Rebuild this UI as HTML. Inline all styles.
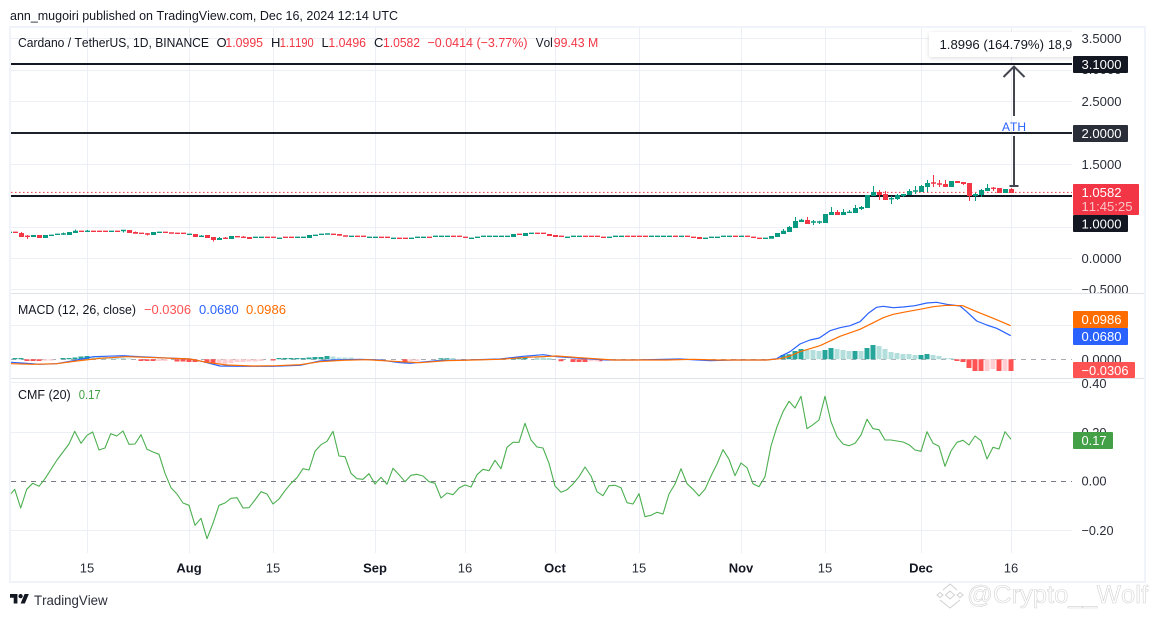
<!DOCTYPE html>
<html lang="en"><head><meta charset="utf-8"><title>ADA chart</title>
<style>
html,body{margin:0;padding:0;background:#fff;width:1154px;height:617px;overflow:hidden}
svg{display:block}
text{font-family:"Liberation Sans",sans-serif;font-size:13px;fill:#131722;font-kerning:none}
.r{fill:#f23645}
.a{fill:#2a2e39}
.w{fill:#fff}
.m{text-anchor:middle;fill:#2a2e39}
.b{text-anchor:middle;font-weight:bold;fill:#131722}
</style></head><body>
<svg width="1154" height="617" viewBox="0 0 1154 617" xmlns="http://www.w3.org/2000/svg">
<defs>
<clipPath id="tip"><rect x="925" y="28" width="147" height="34"/></clipPath>
<clipPath id="ax"><rect x="1073" y="28" width="71" height="265"/></clipPath>
<clipPath id="ax2"><rect x="1073" y="379" width="71" height="170"/></clipPath>
<clipPath id="pane"><rect x="11" y="28" width="1061" height="525"/></clipPath>
<filter id="sh" x="-10%" y="-30%" width="120%" height="170%"><feDropShadow dx="0" dy="1" stdDeviation="2" flood-color="#000" flood-opacity=".14"/></filter>
</defs>
<rect width="1154" height="617" fill="#fff"/>
<text x="10" y="20" textLength="388" lengthAdjust="spacingAndGlyphs" fill="#131722">ann_mugoiri published on TradingView.com, Dec 16, 2024 12:14 UTC</text>

<!-- grid -->
<g stroke="#eceff5" stroke-width="1" fill="none">
<path d="M87.5 28V553M189.5 28V553M273.5 28V553M375.5 28V553M465.5 28V553M555.5 28V553M639.5 28V553M741.5 28V553M825.5 28V553M921.5 28V553M1011.5 28V553"/>
<path d="M11 38.5H1072M11 70.5H1072M11 101.5H1072M11 164.5H1072M11 227.5H1072M11 258.5H1072M11 289.5H1072M11 325.5H1072M11 382.5H1072M11 432.5H1072M11 530.5H1072"/>
</g>
<path d="M11 293.5H1144M11 378.5H1144" stroke="#e0e3eb" stroke-width="1"/>
<rect x="10" y="27" width="1135" height="555" fill="none" stroke="#f0f3fa" stroke-width="2"/>

<!-- horizontal levels -->
<path d="M11 192.4H1072" stroke="#f23645" stroke-width="1" stroke-dasharray="1.5 2.5"/>
<path d="M11 64H1072" stroke="#131722" stroke-width="2"/>
<path d="M11 133H1072" stroke="#1c202b" stroke-width="2"/>
<path d="M11 196H1072" stroke="#131722" stroke-width="2"/>

<g clip-path="url(#pane)">
<!-- candle wicks -->
<path stroke="#089981" stroke-width="1" fill="none" d="M63.5 232.5V235M75.5 229.6v2M87.5 230v2M123.5 230v2.5M201.5 235v2M219.5 237v3M783.5 229v2M789.5 226v2M795.5 217v5M801.5 218.7v2M813.5 220v5M819.5 220.7v3.3M831.5 207v6M843.5 209v4M849.5 210v3M855.5 205v4M861.5 206v4M873.5 186v7M891.5 196v8M897.5 194v6M903.5 194v3M909.5 189v3M915.5 186v8M921.5 185v2M927.5 180v12M975.5 193v8M981.5 189v8M987.5 184v5"/>
<path stroke="#f23645" stroke-width="1" fill="none" d="M27.5 235V239M21.5 232v2M135.5 231.5v2M147.5 233v2.5M213.5 240v1.5M225.5 237v2M243.5 236v2M807.5 217v4M837.5 210v3M879.5 190v10M885.5 191v4M933.5 175v12M939.5 180v7M945.5 180v5M963.5 183v2M969.5 196v5M993.5 187v4M1011.5 188v2"/>
<!-- green bodies -->
<path stroke="#089981" stroke-width="5" fill="none" d="M9.5 231.6v1.4M33.5 235v2M45.5 235v3M51.5 234.6v1.4M57.5 233.6v1.4M63.5 233.3v1.4M69.5 232v3M75.5 230.7v2.3M87.5 230.6v1.4M111.5 230.6v1.4M123.5 229.8v1.4M153.5 232v3M159.5 231.6v1.4M189.5 233.6v1.4M201.5 235.6v1.4M219.5 238v2M231.5 236v3M255.5 236.6v1.4M261.5 236.6v1.4M279.5 237.6v1.4M297.5 236.6v1.4M303.5 236.6v1.4M309.5 235v3M315.5 234.6v1.4M321.5 233.6v1.4M327.5 233.3v1.4M351.5 235.6v1.4M369.5 236.6v1.4M375.5 236.6v1.4M393.5 237.6v1.4M411.5 237.6v1.4M417.5 236.6v1.4M423.5 236.6v1.4M435.5 235.6v1.4M441.5 235.6v1.4M447.5 235.6v1.4M471.5 237.6v1.4M477.5 236.6v1.4M483.5 235.6v1.4M489.5 235.6v1.4M495.5 235.6v1.4M501.5 235.6v1.4M507.5 235.6v1.4M513.5 234v3M525.5 233v3M531.5 232.6v1.4M567.5 236.6v1.4M573.5 235.6v1.4M579.5 235.6v1.4M609.5 236.6v1.4M615.5 235.6v1.4M621.5 235.6v1.4M651.5 235.6v1.4M657.5 235.6v1.4M663.5 235.6v1.4M669.5 235.6v1.4M681.5 235.6v1.4M705.5 237.6v1.4M711.5 236.6v1.4M717.5 236.6v1.4M723.5 235.6v1.4M729.5 235.6v1.4M741.5 235.6v1.4M765.5 237.6v1.4M771.5 236v2.7M777.5 233v4M783.5 230.7v3.3M789.5 227v5M795.5 221v7M801.5 219.7v2.3M813.5 221.3v1.4M819.5 221.3v1.4M825.5 214v9M831.5 212v3M843.5 212v3M849.5 211.6v1.4M855.5 208v5M861.5 207v2M867.5 195v13M873.5 192v4M891.5 198v1.4M897.5 195v4M903.5 194v2M909.5 191v4M915.5 190.3v1.4M921.5 186v6M927.5 183v4M951.5 181v6M975.5 194v2M981.5 190v5M987.5 188v3M1005.5 189v4"/>
<!-- red bodies -->
<path stroke="#f23645" stroke-width="5" fill="none" d="M15.5 231.6v1.4M21.5 233v4M27.5 235.6v1.4M39.5 235v3M81.5 230.6v1.4M93.5 230.6v1.4M99.5 230.6v1.4M105.5 230.6v1.4M117.5 230.6v1.4M129.5 230v3M135.5 232v1.7M141.5 232.6v1.4M147.5 233.3v1.4M165.5 231.6v1.4M171.5 232.3v1.4M177.5 232.6v1.4M183.5 232.6v1.4M195.5 234v3M207.5 235v3M213.5 237v3M225.5 237.6v1.4M237.5 236v1.4M243.5 236.6v1.4M249.5 237v2M267.5 236.6v1.4M273.5 236.6v1.4M285.5 236.6v1.4M291.5 236.6v1.4M333.5 233.6v1.4M339.5 234v1.7M345.5 235.3v1.4M357.5 235.6v1.4M363.5 235.6v1.4M381.5 236.6v1.4M387.5 236.6v1.4M399.5 237.6v1.4M405.5 237.6v1.4M429.5 236.6v1.4M453.5 235.6v1.4M459.5 235.6v1.4M465.5 236.6v1.4M519.5 233.6v1.4M537.5 232.6v1.4M543.5 232.6v1.4M549.5 234v2M555.5 235v2M561.5 235.6v1.4M585.5 235.6v1.4M591.5 235.6v1.4M597.5 235.6v1.4M603.5 236.6v1.4M627.5 235.6v1.4M633.5 235.6v1.4M639.5 235.6v1.4M645.5 235.6v1.4M675.5 235.6v1.4M687.5 235.6v1.4M693.5 236.6v1.4M699.5 237v2M735.5 235.6v1.4M747.5 235.6v1.4M753.5 236.6v1.4M759.5 237.6v1.4M807.5 220v4M837.5 212v3M879.5 192v3M885.5 194v6M933.5 182.3v1.4M939.5 183.3v1.4M945.5 184v3M957.5 181v2M963.5 182v2M969.5 183v13M993.5 187.6v1.4M999.5 188v5M1011.5 189v4"/>
</g>

<!-- arrow -->
<path d="M1014 186V136M1014 116V67" stroke="#434651" stroke-width="2" fill="none"/>
<path d="M1003.5 77L1014 66.5L1024.5 77" stroke="#434651" stroke-width="2" fill="none"/>
<path d="M1009.5 186H1018.5" stroke="#434651" stroke-width="2" fill="none"/>
<text x="1014" y="131" text-anchor="middle" style="font-size:12px;fill:#2962ff">ATH</text>

<!-- tooltip -->
<g clip-path="url(#tip)">
<rect x="929" y="32" width="170" height="25" rx="3" fill="#fff" filter="url(#sh)"/>
<text x="939.5" y="49" textLength="104.5" lengthAdjust="spacingAndGlyphs" fill="#131722">1.8996 (164.79%)</text>
<text x="1048" y="49" textLength="38" lengthAdjust="spacingAndGlyphs" fill="#131722">18,960</text>
</g>
<rect x="1072" y="28" width="72" height="30" fill="#fff"/>

<!-- legend -->
<text x="18" y="47" textLength="191" lengthAdjust="spacingAndGlyphs">Cardano / TetherUS, 1D, BINANCE</text>
<text x="216.5" y="47">O</text><text class="r" x="225.4" y="47" textLength="37.6" lengthAdjust="spacingAndGlyphs">1.0995</text>
<text x="271" y="47">H</text><text class="r" x="279.7" y="47" textLength="34" lengthAdjust="spacingAndGlyphs">1.1190</text>
<text x="321.5" y="47">L</text><text class="r" x="328.4" y="47" textLength="37.6" lengthAdjust="spacingAndGlyphs">1.0496</text>
<text x="374" y="47">C</text><text class="r" x="383" y="47" textLength="37" lengthAdjust="spacingAndGlyphs">1.0582</text>
<text class="r" x="427.5" y="47" textLength="100" lengthAdjust="spacingAndGlyphs">−0.0414 (−3.77%)</text>
<text x="535.8" y="47" textLength="17" lengthAdjust="spacingAndGlyphs">Vol</text>
<text class="r" x="553.8" y="47" textLength="44.5" lengthAdjust="spacingAndGlyphs">99.43 M</text>

<!-- MACD -->
<path d="M11 359.5H1072" stroke="#9598a1" stroke-width="1" stroke-dasharray="5 5" opacity=".8"/>
<g fill="#26a69a">
<path d="M12.5 358h5v1.3h-5zM18.5 358h5v1.3h-5zM60.5 358h5v1.3h-5zM66.5 358h5v1.3h-5zM72.5 357.5h5v1.8h-5zM78.5 356.5h5v2.8h-5zM84.5 356h5v3.3h-5zM276.5 358h5v1.3h-5zM282.5 358h5v1.3h-5zM288.5 358h5v1.3h-5zM294.5 358h5v1.3h-5zM300.5 358h5v1.3h-5zM306.5 357.5h5v1.8h-5zM312.5 357h5v2.3h-5zM318.5 357h5v2.3h-5zM324.5 356h5v3.3h-5zM438.5 358.2h5v1.3h-5zM444.5 358.2h5v1.3h-5zM510.5 357.5h5v1.8h-5zM516.5 357.3h5v2h-5zM522.5 357.3h5v2h-5z"/>
<path d="M780.5 355h5v4.3h-5zM786.5 354.3h5v5h-5zM792.5 351h5v8.3h-5zM798.5 349h5v10.3h-5zM822.5 350h5v9.3h-5zM828.5 348h5v11.3h-5zM852.5 351h5v8.3h-5zM864.5 348h5v11.3h-5zM870.5 345h5v14.3h-5zM918.5 355h5v4.3h-5zM924.5 354h5v5.3h-5z"/>
</g>
<g fill="#b2dfdb">
<path d="M90.5 356.5h5v2.8h-5zM96.5 357h5v2.3h-5zM102.5 357h5v2.3h-5zM108.5 357.5h5v1.8h-5zM114.5 358h5v1.3h-5zM120.5 358h5v1.3h-5zM126.5 358.5h5v.8h-5zM330.5 356.5h5v2.8h-5zM336.5 357.5h5v1.8h-5zM342.5 357.5h5v1.8h-5zM348.5 357.5h5v1.8h-5zM534.5 357.5h5v2.5h-5zM540.5 357.5h5v2.5h-5zM546.5 358h5v2h-5zM450.5 358h5v2h-5z"/>
<path d="M804.5 350h5v9.3h-5zM810.5 350h5v9.3h-5zM816.5 351h5v8.3h-5zM834.5 349h5v10.3h-5zM840.5 350h5v9.3h-5zM846.5 351h5v8.3h-5zM858.5 351h5v8.3h-5zM876.5 346h5v13.3h-5zM882.5 349h5v10.3h-5zM888.5 352h5v7.3h-5zM894.5 353h5v6.3h-5zM900.5 354h5v5.3h-5zM906.5 354h5v5.3h-5zM912.5 355h5v4.3h-5zM930.5 355h5v4.3h-5zM936.5 356h5v3.3h-5zM942.5 358h5v1.3h-5zM948.5 358h5v1.3h-5z"/>
</g>
<g fill="#ff5252">
<path d="M24.5 359.3h5v1.7h-5zM30.5 359.3h5v1.7h-5zM36.5 359.3h5v1.7h-5zM138.5 359.3h5v1.7h-5zM144.5 359.3h5v1.7h-5zM150.5 359.3h5v1.7h-5zM174.5 359.3h5v2.2h-5zM180.5 359.3h5v2.2h-5zM186.5 359.3h5v2.7h-5zM192.5 359.3h5v2.7h-5zM204.5 359.3h5v3.7h-5zM210.5 359.3h5v3.7h-5zM270.5 359.3h5v1.2h-5zM402.5 359.3h5v2.5h-5zM558.5 359.3h5v2h-5zM570.5 359.3h5v2.7h-5zM576.5 359.3h5v2.7h-5zM582.5 359.3h5v2.7h-5zM597.5 359.3h5v2h-5z"/>
<path d="M954.5 359.3h5v1.7h-5zM960.5 359.3h5v2.7h-5zM966.5 359.3h5v8.7h-5zM972.5 359.3h5v11.7h-5zM978.5 359.3h5v11.7h-5zM996.5 359.3h5v11.7h-5zM1008.5 359.3h5v11.7h-5z"/>
</g>
<g fill="#ffcdd2">
<path d="M42.5 359.3h5v1.3h-5zM48.5 359.3h5v1.3h-5zM156.5 359.3h5v1.7h-5zM162.5 359.3h5v1.7h-5zM216.5 359.3h5v4.7h-5zM222.5 359.3h5v4.7h-5zM228.5 359.3h5v3.7h-5zM234.5 359.3h5v2.7h-5zM240.5 359.3h5v2.7h-5zM246.5 359.3h5v2.2h-5zM252.5 359.3h5v2.2h-5zM258.5 359.3h5v1.7h-5zM408.5 359.3h5v2h-5zM414.5 359.3h5v2h-5zM588.5 359.3h5v2h-5zM594.5 359.3h5v2h-5z"/>
<path d="M984.5 359.3h5v11.7h-5zM990.5 359.3h5v9.7h-5zM1002.5 359.3h5v11.7h-5z"/>
</g>
<path fill="none" stroke="#2962ff" stroke-width="1.2" stroke-linejoin="round" d="M11 362.3 26.7 363.3 40 364.3 56.7 363.7 73.3 360.7 93.3 356.7 123.3 355.7 140 356.7 166.7 358 190 359 203.3 361.7 220 366 240 366.3 273.3 366.3 300 365.3 320 361 333.3 360 360 359.3 380 360 400 362.7 410 363.3 436.7 360.7 466.7 360 500 359 523.3 356.3 543.3 354.7 556.7 356.7 580 358.3 606.7 360 633.3 360 680 359 710 360.7 733.3 360 766.7 360 776.7 358.7 780 356.7 790 351.7 800 344 810 340 819.3 338 830 330.7 840 327.7 850 325.7 860 321.7 868.3 313.3 876.7 307.3 883.3 306.3 893.3 307.7 903.3 307 915 305.7 926.7 303 936.7 302.3 946.7 304.3 960 306 966.7 311.7 976.7 321 986.7 325 996.7 328.3 1010.7 335.7"/>
<path fill="none" stroke="#ff6d00" stroke-width="1.2" stroke-linejoin="round" d="M11 363.7 33.3 364.3 56.7 363.7 76.7 361 100 358.3 126.7 356.7 156.7 357.7 190 359 206.7 362.3 226.7 365 253.3 366 276.7 365.7 300 364.7 320 361.7 343.3 360.3 366.7 359.7 400 361.7 420 362.7 446.7 360.7 473.3 360 500 359.3 526.7 357.3 556.7 356 580 357.7 613.3 360 666.7 360 693.3 359.3 716.7 360 766.7 360 780 358.7 790 356 800 351.7 820 345.7 840 336.3 860 329.3 870 324.3 883.3 317.7 893.3 314.3 906.7 311.7 920 309.3 933.3 306.7 946.7 305.3 962.7 305.7 976.7 311.7 993.3 318.3 1010.7 325.7"/>
<text x="18" y="314" textLength="118" lengthAdjust="spacingAndGlyphs">MACD (12, 26, close)</text>
<text x="144" y="314" textLength="47" lengthAdjust="spacingAndGlyphs" style="fill:#ff5252">−0.0306</text>
<text x="199" y="314" textLength="39.7" lengthAdjust="spacingAndGlyphs" style="fill:#2962ff">0.0680</text>
<text x="246" y="314" textLength="40" lengthAdjust="spacingAndGlyphs" style="fill:#ff6d00">0.0986</text>

<!-- CMF -->
<path d="M11 481.5H1072" stroke="#787b86" stroke-width="1" stroke-dasharray="5 5"/>
<path fill="none" stroke="#4caf50" stroke-width="1.1" stroke-linejoin="round" d="M11 493.7 14.7 489.3 20.7 508 26.7 489.3 32.7 483.3 39 486.3 45 478.7 51 469.3 57 460 63 452 69 444 74.7 431.3 81 443.3 87 435.3 92.7 432 99 450 105 448 110.7 433.7 116.7 436 123 431 129 444.3 135 444 141 434.7 147 449.3 153 452 159 454.3 165 473.3 171 487.7 177 494 183 503 189 505.3 195 525.3 201 518.3 207 538.7 213 523.3 219 505.3 225 503 231 498.3 237 497.7 243 508 249 507.7 255 500 261 491.7 267 494 273 504 279 499 285 490.7 291 483.3 297 477.7 303 468.7 309 470 315 451.3 321 444.7 327 441.3 333 431.3 339 456 345 456.7 351 473.3 357 478.7 363 479.3 369 473.7 375 484 381 477.3 387 484.3 393 468.3 399 474.7 405 481.7 411 475.3 416.7 474.3 423 476 429 481.7 435 483.3 441 498 447 493 453 494.7 459 488 465 485 471 487 477 474.7 483 469.3 489 470.7 495 460.3 501 468.7 507 447.3 513 442.3 519 442.3 525 423.3 531 440 537 447 543 448 549 463.3 555 486 561 492.3 567 489.7 573 484 579 476.7 585 467 591 476 597 491.7 603 495.7 609 485.7 615 485.3 621 487.7 627 502.7 633 504 639 493.7 645 516.7 651 515.3 657 512.3 663 514 669 494 675 484 681 468.7 687 483.7 693 489.3 699 496 705 489.3 711 476 717 464 723 449.7 729 459.3 735 475.7 741 463 747 467.7 753 483.7 759 486.7 765 476.7 771 446 777 426.7 783 411.7 789 401.3 795 408 801 396.3 807 428.7 813 424.7 819 420 825 396.3 831 421.7 837 436.7 843 444 849 445.7 855 443.3 861 435 867 419.3 873 428.7 879 429.7 885 440 891 440 897 441 903 442 909 444.7 915 450 921 451.3 927 431.7 933 443.3 939 446.3 945 466.3 951 451 957 442.3 963 440.3 969 445 975 436 981 440.7 987 459 993 447.3 999 449 1005 431.7 1011 439.3"/>
<text x="18" y="399" textLength="52.7" lengthAdjust="spacingAndGlyphs">CMF (20)</text>
<text x="78.7" y="399" textLength="22" lengthAdjust="spacingAndGlyphs" style="fill:#43a047">0.17</text>

<!-- price axis main -->
<g clip-path="url(#ax)">
<text class="a" x="1081.5" y="43" textLength="40" lengthAdjust="spacingAndGlyphs">3.5000</text>
<text class="a" x="1081.5" y="74" textLength="40" lengthAdjust="spacingAndGlyphs">3.0000</text>
<text class="a" x="1081.5" y="106" textLength="40" lengthAdjust="spacingAndGlyphs">2.5000</text>
<text class="a" x="1081.5" y="169" textLength="40" lengthAdjust="spacingAndGlyphs">1.5000</text>
<text class="a" x="1081.5" y="263" textLength="40" lengthAdjust="spacingAndGlyphs">0.0000</text>
<text class="a" x="1081.5" y="294" textLength="47" lengthAdjust="spacingAndGlyphs">−0.5000</text>
</g>
<rect x="1073" y="56" width="55" height="17" rx="1" fill="#131722"/>
<text class="w" x="1081.5" y="69" textLength="40" lengthAdjust="spacingAndGlyphs">3.1000</text>
<rect x="1073" y="125" width="55" height="17" rx="1" fill="#2a2e39"/>
<text class="w" x="1081.5" y="138" textLength="40" lengthAdjust="spacingAndGlyphs">2.0000</text>
<rect x="1073" y="184" width="66" height="31" rx="1" fill="#f23645"/>
<text class="w" x="1081.5" y="197" textLength="40" lengthAdjust="spacingAndGlyphs">1.0582</text>
<text x="1081.5" y="211" textLength="51" lengthAdjust="spacingAndGlyphs" style="fill:#fbc3c8">11:45:25</text>
<rect x="1073" y="215" width="55" height="17" rx="1" fill="#131722"/>
<text class="w" x="1081.5" y="228.5" textLength="40" lengthAdjust="spacingAndGlyphs">1.0000</text>

<!-- price axis MACD -->
<text class="a" x="1081.5" y="364" textLength="40" lengthAdjust="spacingAndGlyphs">0.0000</text>
<rect x="1073" y="311" width="55" height="17" rx="1" fill="#ff6d00"/>
<text class="w" x="1081.5" y="324" textLength="40" lengthAdjust="spacingAndGlyphs">0.0986</text>
<rect x="1073" y="328" width="55" height="17" rx="1" fill="#2962ff"/>
<text class="w" x="1081.5" y="341" textLength="40" lengthAdjust="spacingAndGlyphs">0.0680</text>
<rect x="1073" y="362" width="62" height="16" rx="1" fill="#ff5252"/>
<text class="w" x="1081.5" y="375" textLength="47" lengthAdjust="spacingAndGlyphs">−0.0306</text>

<!-- price axis CMF -->
<g clip-path="url(#ax2)">
<text class="a" x="1081.5" y="388" textLength="25" lengthAdjust="spacingAndGlyphs">0.40</text>
<text class="a" x="1081.5" y="437" textLength="25" lengthAdjust="spacingAndGlyphs">0.20</text>
<text class="a" x="1081.5" y="485.5" textLength="25" lengthAdjust="spacingAndGlyphs">0.00</text>
<text class="a" x="1081.5" y="535" textLength="32" lengthAdjust="spacingAndGlyphs">−0.20</text>
</g>
<rect x="1073" y="432" width="40" height="17" rx="1" fill="#43a047"/>
<text class="w" x="1081.5" y="445" textLength="25" lengthAdjust="spacingAndGlyphs">0.17</text>

<!-- time axis -->
<text class="m" x="87" y="572.5">15</text>
<text class="b" x="189" y="572.5">Aug</text>
<text class="m" x="273" y="572.5">15</text>
<text class="b" x="375" y="572.5">Sep</text>
<text class="m" x="465" y="572.5">16</text>
<text class="b" x="555" y="572.5">Oct</text>
<text class="m" x="639" y="572.5">15</text>
<text class="b" x="741" y="572.5">Nov</text>
<text class="m" x="825" y="572.5">15</text>
<text class="b" x="921" y="572.5">Dec</text>
<text class="m" x="1011" y="572.5">16</text>

<!-- TradingView logo -->
<g transform="translate(10 591.9) scale(.53)" fill="#131722">
<path d="M14 22H7V11H0V4h14v18zM28 22h-8l7.5-18h8L28 22z"/><circle cx="20" cy="8" r="4"/>
</g>
<text x="34" y="605" textLength="73.6" lengthAdjust="spacingAndGlyphs" style="font-size:14px;fill:#2a2e39">TradingView</text>

<!-- watermark -->
<g fill="none" stroke="#d0d0d0" stroke-width="1">
<path d="M943 590L950 584L957 590"/>
<path d="M945.5 595L950 591L954.5 595L950 599Z"/>
<path d="M937 595L940 592.5L943 595L940 597.5Z"/>
<path d="M957 595L960 592.5L963 595L960 597.5Z"/>
<path d="M940 600L950 608L960 600"/>
</g>
<text x="967" y="603" textLength="181" lengthAdjust="spacingAndGlyphs" style="font-size:25px;fill:#fff;stroke:#d4d4d4;stroke-width:.6">@Crypto__Wolf</text>
</svg>
</body></html>
